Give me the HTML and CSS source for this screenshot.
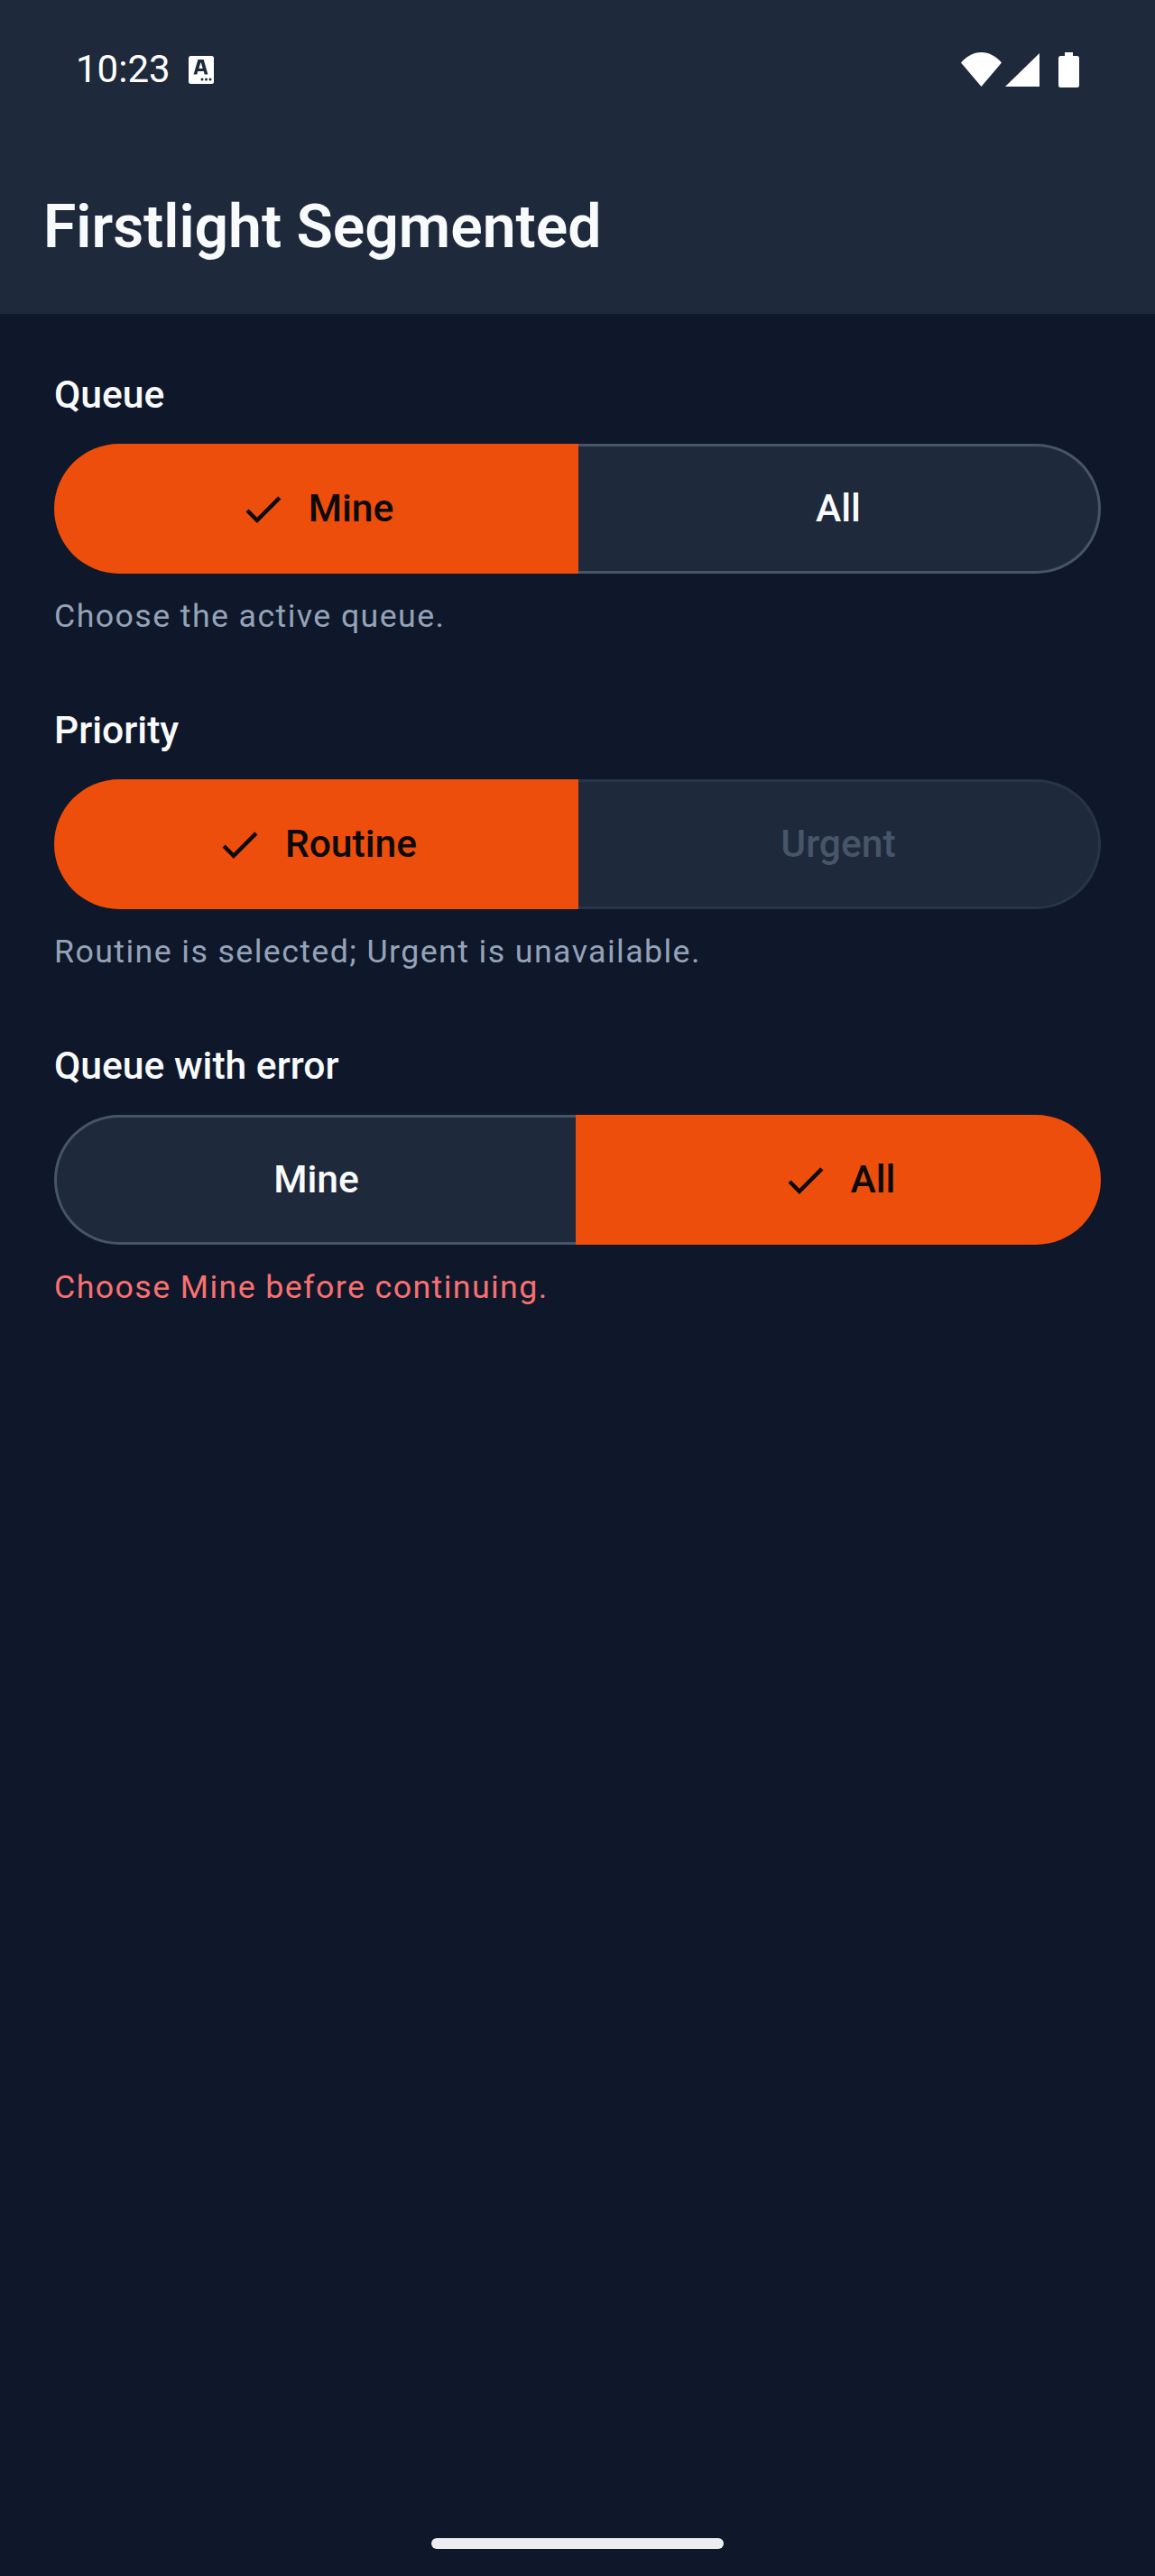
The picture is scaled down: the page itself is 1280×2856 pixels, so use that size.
FILE: index.html
```html
<!DOCTYPE html>
<html lang="en">
<head>
<meta charset="utf-8">
<title>Firstlight Segmented</title>
<link rel="stylesheet" href="styles.css">
</head>
<body>
<div class="screen">
  <header class="appbar">
    <div class="status">
      <div class="status-left">
        <span class="time">10:23</span>
        <svg class="a-icon" viewBox="0 0 28 31"><rect width="28" height="31" rx="2.5" fill="#fff"/><path d="M10.4 4 5.6 20.5h3.7l.9-3.4h6.6l.9 3.4h3.7L16.7 4zm1 10 1.9-6.6h.5l1.9 6.6z" fill="#1e293b"/><circle cx="15" cy="26" r="1.5" fill="#1e293b"/><circle cx="19.5" cy="26" r="1.5" fill="#1e293b"/><circle cx="24" cy="26" r="1.5" fill="#1e293b"/></svg>
      </div>
      <div class="status-right">
        <svg class="wifi" viewBox="0 0 45 38"><path d="M0 11.500C6 4.500 13.800 0 22.500 0S39 4.500 45 11.500L22.500 38z" fill="#fff"/></svg>
        <svg class="signal" viewBox="0 0 38 37"><path d="M38 0v37H0z" fill="#fff"/></svg>
        <svg class="battery" viewBox="0 0 23 39"><path d="M7 0h9v4h4.500A2.500 2.500 0 0 1 23 6.500v30a2.500 2.500 0 0 1-2.500 2.500h-18A2.500 2.500 0 0 1 0 36.500v-30A2.500 2.500 0 0 1 2.500 4H7z" fill="#fff"/></svg>
      </div>
    </div>
    <h1 class="title">Firstlight Segmented</h1>
  </header>

  <main class="content">
    <section class="field">
      <h2 class="label">Queue</h2>
      <div class="segmented first-on">
        <div class="seg seg-on">
          <svg class="check" viewBox="0 0 24 24"><path d="M9 16.170 4.830 12l-1.420 1.410L9 19 21 7l-1.410-1.410z"/></svg>
          <span class="seg-text">Mine</span>
        </div>
        <div class="seg seg-off seg-right"><span class="seg-text">All</span></div>
      </div>
      <p class="help">Choose the active queue.</p>
    </section>

    <section class="field">
      <h2 class="label">Priority</h2>
      <div class="segmented first-on">
        <div class="seg seg-on">
          <svg class="check" viewBox="0 0 24 24"><path d="M9 16.170 4.830 12l-1.420 1.410L9 19 21 7l-1.410-1.410z"/></svg>
          <span class="seg-text">Routine</span>
        </div>
        <div class="seg seg-disabled seg-right"><span class="seg-text">Urgent</span></div>
      </div>
      <p class="help">Routine is selected; Urgent is unavailable.</p>
    </section>

    <section class="field">
      <h2 class="label">Queue with error</h2>
      <div class="segmented last-on">
        <div class="seg seg-off seg-left"><span class="seg-text">Mine</span></div>
        <div class="seg seg-on">
          <svg class="check" viewBox="0 0 24 24"><path d="M9 16.170 4.830 12l-1.420 1.410L9 19 21 7l-1.410-1.410z"/></svg>
          <span class="seg-text">All</span>
        </div>
      </div>
      <p class="help help-error">Choose Mine before continuing.</p>
    </section>
  </main>

  <footer class="gesture"><div class="home-bar"></div></footer>
</div>
</body>
</html>
```

FILE: styles.css
```css
* { box-sizing: border-box; }
html, body { margin: 0; padding: 0; }
body { background: #0f172a; font-family: Roboto, "Liberation Sans", sans-serif; }
.screen { height: 2856px; display: flex; flex-direction: column; background: #0f172a; }

.appbar { height: 348px; background: #1e293b; display: flex; flex-direction: column; }
.status { height: 207px; padding: 58px 84px 0 84px; display: flex; justify-content: space-between; align-items: flex-start; }
.status-left { display: flex; align-items: center; gap: 20px; height: 38px; }
.time { font-size: 42px; line-height: 38px; color: #fff; }
.a-icon { width: 28px; height: 31px; display: block; }
.status-right { display: flex; align-items: flex-start; }
.wifi { width: 45px; height: 38px; display: block; }
.signal { width: 38px; height: 37px; margin-left: 4px; margin-top: 1px; display: block; }
.battery { width: 23px; height: 39px; margin-left: 21px; display: block; }
.title { margin: 0; padding-left: 48px; font-size: 66px; line-height: 90px; font-weight: 600; color: #f8fafc; }

.content { flex: 1; padding: 62px 60px 0; display: flex; flex-direction: column; gap: 76px; }
.label { margin: 0 0 28px; font-size: 42.6px; line-height: 54px; font-weight: 500; color: #f8fafc; }
.segmented { display: grid; height: 144px; }
.first-on { grid-template-columns: 581fr 579fr; }
.last-on { grid-template-columns: 578fr 582fr; }
.seg { display: flex; align-items: center; justify-content: center; gap: 24px; font-size: 42.6px; font-weight: 500; }
.seg-text { margin-bottom: 2px; }
.seg-on { background: #ee4e0b; color: #0a0a0a; }
.first-on .seg-on { border-radius: 72px 0 0 72px; }
.last-on .seg-on { border-radius: 0 72px 72px 0; }
.seg-off { background: #1e293b; color: #f8fafc; border: 3px solid #475569; }
.seg-disabled { background: #1e293b; color: #475569; border: 3px solid #273449; }
.seg-right { border-left: 0; border-radius: 0 72px 72px 0; }
.seg-left { border-right: 0; border-radius: 72px 0 0 72px; }
.check { width: 53px; height: 53px; fill: #0a0a0a; display: block; }
.help { margin: 24px 0 0; font-size: 35.75px; line-height: 46px; letter-spacing: 1.4px; color: #94a3b8; }
.help-error { color: #f87171; }

.gesture { height: 42px; display: flex; justify-content: center; }
.home-bar { width: 324px; height: 12px; border-radius: 6px; background: #ebedef; }
```
